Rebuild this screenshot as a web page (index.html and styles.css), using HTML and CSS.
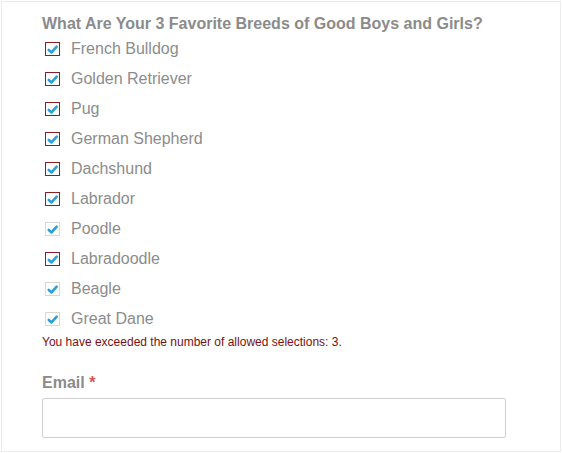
FILE: index.html
```html
<!DOCTYPE html>
<html>
<head>
<meta charset="utf-8">
<link rel="stylesheet" href="styles.css">
</head>
<body>
<div class="frame">
  <form class="form">
    <fieldset class="field">
      <legend class="label">What Are Your 3 Favorite Breeds of Good Boys and Girls?</legend>
      <ul class="choices">
        <li class="choice"><span class="box invalid"><svg viewBox="0 0 14 14" class="check"><path d="M3 7.5 L6 10.2 L11.5 4"/></svg></span><span class="text">French Bulldog</span></li>
        <li class="choice"><span class="box invalid"><svg viewBox="0 0 14 14" class="check"><path d="M3 7.5 L6 10.2 L11.5 4"/></svg></span><span class="text">Golden Retriever</span></li>
        <li class="choice"><span class="box invalid"><svg viewBox="0 0 14 14" class="check"><path d="M3 7.5 L6 10.2 L11.5 4"/></svg></span><span class="text">Pug</span></li>
        <li class="choice"><span class="box invalid"><svg viewBox="0 0 14 14" class="check"><path d="M3 7.5 L6 10.2 L11.5 4"/></svg></span><span class="text">German Shepherd</span></li>
        <li class="choice"><span class="box invalid"><svg viewBox="0 0 14 14" class="check"><path d="M3 7.5 L6 10.2 L11.5 4"/></svg></span><span class="text">Dachshund</span></li>
        <li class="choice"><span class="box invalid"><svg viewBox="0 0 14 14" class="check"><path d="M3 7.5 L6 10.2 L11.5 4"/></svg></span><span class="text">Labrador</span></li>
        <li class="choice"><span class="box"><svg viewBox="0 0 14 14" class="check"><path d="M3 7.5 L6 10.2 L11.5 4"/></svg></span><span class="text">Poodle</span></li>
        <li class="choice"><span class="box invalid"><svg viewBox="0 0 14 14" class="check"><path d="M3 7.5 L6 10.2 L11.5 4"/></svg></span><span class="text">Labradoodle</span></li>
        <li class="choice"><span class="box"><svg viewBox="0 0 14 14" class="check"><path d="M3 7.5 L6 10.2 L11.5 4"/></svg></span><span class="text">Beagle</span></li>
        <li class="choice"><span class="box"><svg viewBox="0 0 14 14" class="check"><path d="M3 7.5 L6 10.2 L11.5 4"/></svg></span><span class="text">Great Dane</span></li>
      </ul>
      <p class="error">You have exceeded the number of allowed selections: 3.</p>
    </fieldset>
    <div class="field email-field">
      <label class="label" for="email">Email <span class="req">*</span></label>
      <input id="email" class="input" type="email">
    </div>
  </form>
</div>
</body>
</html>
```

FILE: styles.css
```css
* { box-sizing: border-box; }
html, body { margin: 0; padding: 0; background: #fff; }
body { font-family: "Liberation Sans", Arial, sans-serif; }
.frame {
  margin: 1px 1px 0 1px;
  width: 560px;
  height: 451px;
  border: 1px solid #ececec;
  overflow: hidden;
}
.form { padding: 12px 0 0 40px; }
.field { border: 0; margin: 0; padding: 0; min-width: 0; }
.label {
  display: block;
  padding: 0;
  font-size: 16px;
  font-weight: bold;
  color: #8b8b8b;
  line-height: 20px;
}
.choices { list-style: none; margin: 0; padding: 0; }
.choice {
  display: flex;
  align-items: center;
  height: 30px;
  font-size: 16px;
  color: #8c8c8c;
}
.box {
  width: 15px;
  height: 14px;
  border: 1px solid #d8d8d8;
  margin: 0 11px 0 3px;
  display: flex;
  align-items: center;
  justify-content: center;
  background: #fff;
}
.box.invalid { border-color: #8e1c25; }
.check { width: 13px; height: 13px; }
.check path {
  fill: none;
  stroke: #2a9fd8;
  stroke-width: 2.8;
  stroke-linecap: round;
  stroke-linejoin: round;
}
.error {
  margin: 0;
  font-size: 12px;
  line-height: 16px;
  color: #7a1010;
}
.email-field { margin-top: 23px; }
.req { color: #d9534f; }
.input {
  display: block;
  margin-top: 5px;
  width: 464px;
  height: 40px;
  border: 1px solid #cfcfcf;
  border-radius: 2px;
  background: #fff;
}
```
